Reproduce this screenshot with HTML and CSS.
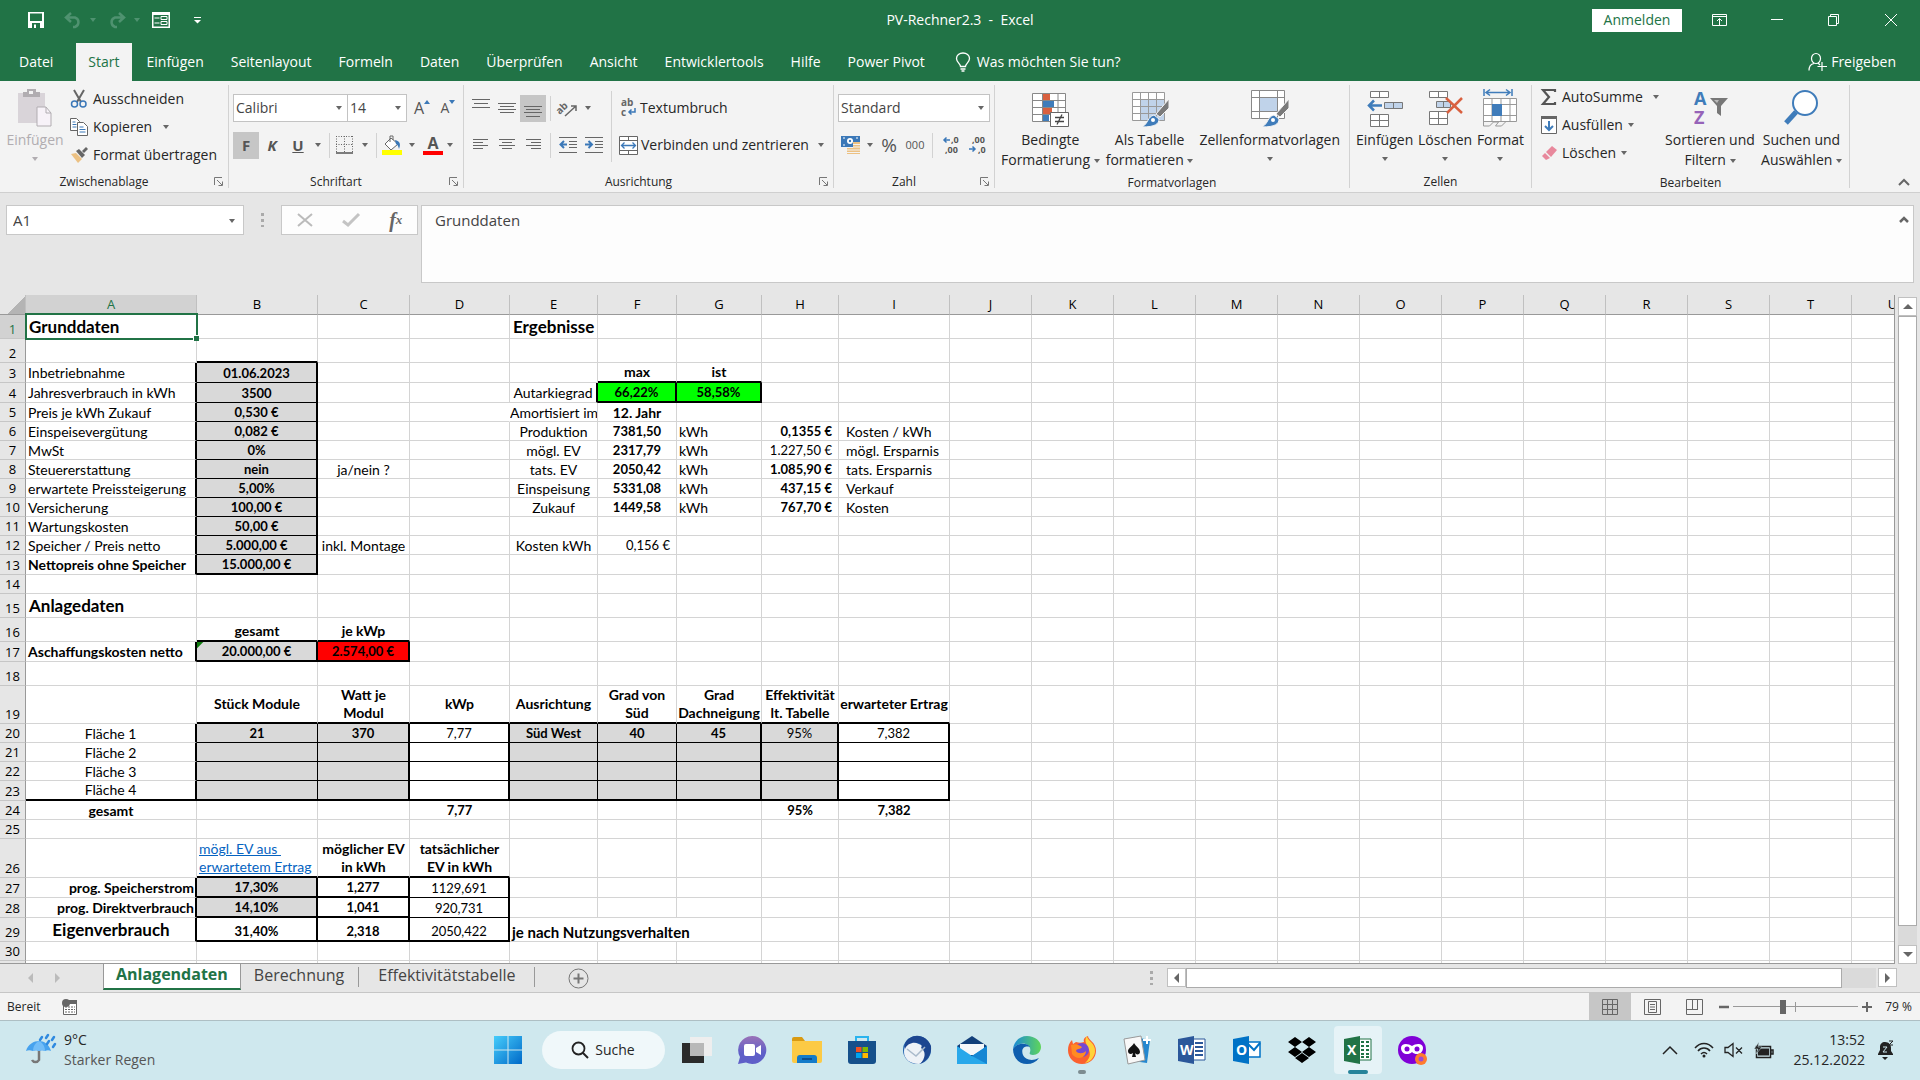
FILE: index.html
```html
<!DOCTYPE html>
<html lang="de">
<head>
<meta charset="utf-8">
<title>PV-Rechner2.3 - Excel</title>
<link rel="stylesheet" href="styles.css">
</head>
<body>
<div class="app">

<header class="titlebar">
  <div class="quick">
    <button aria-label="Speichern"><svg width="16" height="16" viewBox="0 0 16 16"><path d="M0 0h16v16H0z" fill="#fff"/><path d="M2 1.500h12V9H2zM4 11h8v5H4z" fill="#217346"/><path d="M6 12.500h2V16H6z" fill="#fff"/></svg></button>
    <button class="dim" aria-label="Rückgängig"><svg width="18" height="16" viewBox="0 0 18 16"><path d="M7 1L2 5.500 7 10M2 5.500h9a5 5 0 0 1 0 9.500H9" fill="none" stroke="currentColor" stroke-width="2.500"/></svg><i class="caret"></i></button>
    <button class="dim" aria-label="Wiederholen"><svg width="18" height="16" viewBox="0 0 18 16"><path d="M11 1l5 4.500L11 10M16 5.500H7a5 5 0 0 0 0 9.500h2" fill="none" stroke="currentColor" stroke-width="2.500"/></svg><i class="caret"></i></button>
    <button aria-label="Formular"><svg width="18" height="16" viewBox="0 0 18 16"><path d="M0 0h18v16H0z" fill="#fff"/><path d="M1.500 3h15v11.500h-15z" fill="#217346"/><path d="M2.500 6h5M2.500 11h5" stroke="#fff" stroke-width="1.200"/><path d="M9 4.500h6v3H9zM9 9.500h6v3H9z" fill="none" stroke="#fff"/></svg></button>
    <button class="customize" aria-label="Schnellzugriff anpassen"><svg width="7" height="7" viewBox="0 0 7 7"><path d="M0 .5h7" stroke="#fff"/><path d="M0 3h7L3.500 6.500z" fill="#fff"/></svg></button>
  </div>
  <h1 class="doc-title">PV-Rechner2.3&nbsp; - &nbsp;Excel</h1>
  <div class="window-buttons">
    <button class="signin">Anmelden</button>
    <button aria-label="Menüband-Anzeigeoptionen"><svg width="16" height="14" viewBox="0 0 16 14"><path d="M.5 1.500h14v11H.5zM.5 3.500h14M7.500 12V5.500M5 8l2.500-2.500L10 8" fill="none" stroke="#fff"/></svg></button>
    <button aria-label="Minimieren"><svg width="14" height="14" viewBox="0 0 14 14"><path d="M1 6.500h12" stroke="#fff"/></svg></button>
    <button aria-label="Verkleinern"><svg width="14" height="14" viewBox="0 0 14 14"><path d="M1.500 3.500h8v9h-8zM3.500 3V1.500h8v9h-2" fill="none" stroke="#fff"/></svg></button>
    <button aria-label="Schließen"><svg width="14" height="14" viewBox="0 0 14 14"><path d="M1 1l12 12M13 1L1 13" stroke="#fff"/></svg></button>
  </div>
</header>

<nav class="tabs">
  <button class="file">Datei</button>
  <button class="active">Start</button>
  <button>Einfügen</button>
  <button>Seitenlayout</button>
  <button>Formeln</button>
  <button>Daten</button>
  <button>Überprüfen</button>
  <button>Ansicht</button>
  <button>Entwicklertools</button>
  <button>Hilfe</button>
  <button>Power Pivot</button>
  <button class="tell"><svg width="16" height="20" viewBox="0 0 16 20"><path d="M5.500 14.500c0-3-4-4-4-8a6.500 5.500 0 0 1 13 0c0 4-4 5-4 8zM5.500 17h5M6.500 19h3" fill="none" stroke="#fff" stroke-width="1.300"/></svg>Was möchten Sie tun?</button>
  <button class="share"><svg width="19" height="18" viewBox="0 0 19 18"><ellipse cx="8" cy="5.500" rx="4.500" ry="5" fill="none" stroke="#fff" stroke-width="1.200"/><path d="M1 17.500c0-4 2-6.500 5-7M10 10l2 2M14 9v9M9.500 13.500H19" fill="none" stroke="#fff" stroke-width="1.200"/></svg>Freigeben</button>
</nav>

<section class="ribbon">
  <div class="group g-clip">
    <div class="body">
      <button class="big disabled"><svg width="36" height="38" viewBox="0 0 36 38"><path d="M1 4h27v30H1z" fill="#d9d4d9"/><path d="M6 8V3h4V0h9v3h4v5z" fill="#b1adb1"/><path d="M12 2h4v3h-4z" fill="#f3f3f3"/><path d="M20 18h9l5 6v13H20z" fill="#f7f2f8" stroke="#b1adb1"/><path d="M29 18v6h5" fill="none" stroke="#b1adb1"/></svg><span>Einfügen</span><i class="caret"></i></button>
      <div class="stack">
        <button><svg width="18" height="18" viewBox="0 0 18 18"><path d="M4 0l7 12M14 0L7 12" stroke="#666" stroke-width="2"/><circle cx="4.500" cy="14" r="3" fill="none" stroke="#3b78b8" stroke-width="1.500"/><circle cx="13" cy="14" r="3" fill="none" stroke="#3b78b8" stroke-width="1.500"/></svg>Ausschneiden</button>
        <button><svg width="18" height="18" viewBox="0 0 18 18"><path d="M.5.5h6l3 3v9h-9z" fill="#fff" stroke="#666"/><path d="M2.500 4h3M2.500 6.500h4M2.500 9h4" stroke="#3b78b8"/><path d="M7.500 4.500h6l4 4v9h-10z" fill="#fff" stroke="#666"/><path d="M9.500 9h4M9.500 11.500h6M9.500 14h6" stroke="#3b78b8"/></svg>Kopieren<i class="caret"></i></button>
        <button><svg width="18" height="18" viewBox="0 0 18 18"><path d="M1 8l5-1 6 6-4 4z" fill="#ecc183"/><path d="M6 5l3-2 6 6-3 3z" fill="#666"/><path d="M12 5l4-4 2 2-4 4z" fill="#666"/></svg>Format übertragen</button>
      </div>
    </div>
    <footer class="has-launch">Zwischenablage<svg class="launch" width="9" height="9" viewBox="0 0 9 9"><path d="M.5 8V.5H8M3 3l5 5M8.500 4.500v4h-4" fill="none" stroke="#777"/></svg></footer>
  </div>

  <div class="group g-font">
    <div class="body rows">
      <div class="row">
        <span class="combo font"><select aria-label="Schriftart"><option>Calibri</option></select></span><span class="combo size"><select aria-label="Schriftgrad"><option>14</option></select></span>
        <button class="ic grow" aria-label="Schrift vergrößern">A<svg width="6" height="4" viewBox="0 0 6 4"><path d="M0 4l3-4 3 4z" fill="#3b78b8"/></svg></button>
        <button class="ic grow small" aria-label="Schrift verkleinern">A<svg width="6" height="4" viewBox="0 0 6 4"><path d="M0 0h6L3 4z" fill="#3b78b8"/></svg></button>
      </div>
      <div class="row">
        <button class="ic on bold">F</button>
        <button class="ic bold italic">K</button>
        <button class="ic bold under">U</button><i class="caret"></i>
        <hr>
        <button class="ic" aria-label="Rahmen"><svg width="18" height="18" viewBox="0 0 18 18"><path d="M.5 0v17M8.500 0v17M16.500 0v17M0 .5h17M0 8.500h17" stroke="#666" stroke-dasharray="1 1.500"/><path d="M0 17h17" stroke="#555" stroke-width="1.500"/></svg></button><i class="caret"></i>
        <hr>
        <button class="ic" aria-label="Füllfarbe"><svg width="20" height="20" viewBox="0 0 20 20"><path d="M9 3l7 6-7 6-6-6zM8 7V1h3v4" fill="#fff" stroke="#666"/><path d="M13 5c5 1 6 4 4 9-1-3-1-4-3-5z" fill="#3b78b8"/><path d="M0 15h20v5H0z" fill="#ff0"/></svg></button><i class="caret"></i>
        <button class="ic fontcolor" aria-label="Schriftfarbe">A</button><i class="caret"></i>
      </div>
    </div>
    <footer class="has-launch">Schriftart<svg class="launch" width="9" height="9" viewBox="0 0 9 9"><path d="M.5 8V.5H8M3 3l5 5M8.500 4.500v4h-4" fill="none" stroke="#777"/></svg></footer>
  </div>

  <div class="group g-align">
    <div class="body">
      <div class="rows">
        <div class="row">
          <button class="ic" aria-label="Oben"><svg width="18" height="18" viewBox="0 0 18 18"><path d="M0 .5h18M2 4.500h14M0 8.500h18" stroke="#666"/></svg></button>
          <button class="ic" aria-label="Mitte"><svg width="18" height="18" viewBox="0 0 18 18"><path d="M0 4.500h18M2 7.500h14M0 10.500h18M2 13.500h14" stroke="#666"/></svg></button>
          <button class="ic on" aria-label="Unten"><svg width="18" height="18" viewBox="0 0 18 18"><path d="M0 7.500h18M2 10.500h14M0 13.500h18M2 17.500h14" stroke="#666"/></svg></button>
          <hr>
          <button class="ic" aria-label="Ausrichtung"><svg width="18" height="18" viewBox="0 0 18 18"><text x="-3" y="11" transform="rotate(-45 5 9)" class="t-icon">ab</text><path d="M6 17L17 7M12 7h5v5" fill="none" stroke="#666" stroke-width="1.500"/></svg></button><i class="caret"></i>
        </div>
        <div class="row">
          <button class="ic" aria-label="Links"><svg width="18" height="18" viewBox="0 0 18 18"><path d="M1 3.500h15M1 6.500h10M1 9.500h15M1 12.500h10" stroke="#666"/></svg></button>
          <button class="ic" aria-label="Zentriert"><svg width="18" height="18" viewBox="0 0 18 18"><path d="M1 3.500h16M4 6.500h10M1 9.500h16M4 12.500h10" stroke="#666"/></svg></button>
          <button class="ic" aria-label="Rechts"><svg width="18" height="18" viewBox="0 0 18 18"><path d="M2 3.500h15M7 6.500h10M2 9.500h15M7 12.500h10" stroke="#666"/></svg></button>
          <hr>
          <button class="ic" aria-label="Einzug verkleinern"><svg width="18" height="18" viewBox="0 0 18 18"><path d="M0 1.500h18M10 5.500h8M10 8.500h8M10 11.500h8M0 16.500h18" stroke="#666"/><path d="M8 8.500H2M5 5L1.500 8.500 5 12" fill="none" stroke="#3b78b8" stroke-width="2"/></svg></button>
          <button class="ic" aria-label="Einzug vergrößern"><svg width="18" height="18" viewBox="0 0 18 18"><path d="M0 1.500h18M10 5.500h8M10 8.500h8M10 11.500h8M0 16.500h18" stroke="#666"/><path d="M0 8.500h6M3.500 5L7 8.500 3.500 12" fill="none" stroke="#3b78b8" stroke-width="2"/></svg></button>
        </div>
      </div>
      <hr class="tall">
      <div class="rows">
        <div class="row"><button class="lab"><svg width="18" height="18" viewBox="0 0 18 18"><text x="2" y="7" class="t-icon">ab</text><text x="2" y="17" class="t-icon">c</text><path d="M16 9v4H10M12.500 10.500L10 13l2.500 2.500" fill="none" stroke="#3b78b8" stroke-width="1.500"/></svg>Textumbruch</button></div>
        <div class="row"><button class="lab"><svg width="19" height="19" viewBox="0 0 19 19"><path d="M.5.5h18v18H.5zM.5 4.500h18M.5 14.500h18M9.500 0v4M9.500 15v4" fill="#fff" stroke="#666"/><path d="M2.500 9.500h14M5.500 6.500l-3 3 3 3M13.500 6.500l3 3-3 3" fill="none" stroke="#3b78b8" stroke-width="1.300"/></svg>Verbinden und zentrieren<i class="caret"></i></button></div>
      </div>
    </div>
    <footer class="has-launch">Ausrichtung<svg class="launch" width="9" height="9" viewBox="0 0 9 9"><path d="M.5 8V.5H8M3 3l5 5M8.500 4.500v4h-4" fill="none" stroke="#777"/></svg></footer>
  </div>

  <div class="group g-num">
    <div class="body rows">
      <div class="row"><span class="combo wide"><select aria-label="Zahlenformat"><option>Standard</option></select></span></div>
      <div class="row">
        <button class="ic" aria-label="Währung"><svg width="20" height="20" viewBox="0 0 20 20"><path d="M0 1h19v11H0z" fill="#3b78b8"/><circle cx="9" cy="6" r="3" fill="#fff"/><circle cx="9" cy="6" r="1.200" fill="#3b78b8"/><path d="M2 3h2M15 3h2M2 10h2" stroke="#fff"/><path d="M12 7h7v12h-7zM6 13h7v6H6z" fill="#ecc183"/><path d="M12 9.500h7M12 12h7M6 15h13M6 17.500h13" stroke="#f3f3f3"/></svg></button><i class="caret"></i>
        <button class="ic pct">%</button>
        <button class="ic zeros">000</button>
        <hr>
        <button class="ic" aria-label="Dezimalstelle hinzufügen"><svg width="18" height="20" viewBox="0 0 18 20"><text x="8" y="8" class="t-num">,0</text><text x="2" y="18" class="t-num">,00</text><path d="M7 5H1M3.500 2.500L1 5l2.500 2.500" fill="none" stroke="#3b78b8" stroke-width="1.500"/></svg></button>
        <button class="ic" aria-label="Dezimalstelle löschen"><svg width="18" height="20" viewBox="0 0 18 20"><text x="3" y="8" class="t-num">,00</text><text x="9" y="18" class="t-num">,0</text><path d="M0 14h6M3.500 11.500L6 14l-2.500 2.500" fill="none" stroke="#3b78b8" stroke-width="1.500"/></svg></button>
      </div>
    </div>
    <footer class="has-launch">Zahl<svg class="launch" width="9" height="9" viewBox="0 0 9 9"><path d="M.5 8V.5H8M3 3l5 5M8.500 4.500v4h-4" fill="none" stroke="#777"/></svg></footer>
  </div>

  <div class="group g-styles">
    <div class="body">
      <button class="big"><svg width="38" height="38" viewBox="0 0 38 38"><path d="M1.500 4.500h33v28h-33z" fill="#fff"/><path d="M12 4h7v7h-7zM12 19h9v7h-9z" fill="#d9603f"/><path d="M12 11h11v8H12zM12 26h6v6h-6z" fill="#3f7cba"/><path d="M1.500 4.500h33v28h-33zM11.500 4v28M27 4v28M1 11.500h33M1 18.500h33M1 25.500h33" fill="none" stroke="#888"/><path d="M19.500 23.500h18v14h-18z" fill="#fff" stroke="#666"/><path d="M24 28.500h9M24 32.500h9M31 25.500l-5 10" stroke="#444" stroke-width="1.300"/></svg><span>Bedingte<br>Formatierung <i class="caret"></i></span></button>
      <button class="big"><svg width="38" height="38" viewBox="0 0 38 38"><path d="M1.500 3.500h32v28h-32z" fill="#fff"/><path d="M9 10h25v22H9z" fill="#c0d3ea"/><path d="M1.500 3.500h32v28h-32zM9.500 4v28M17.500 4v28M25.500 4v28M1 10.500h32M1 17.500h32M1 24.500h32" fill="none" stroke="#999"/><path d="M38 10v9l-9 9-4-3z" fill="#7a7a7a" stroke="#f3f3f3"/><path d="M23 26l5 4c0 5-4 8-17 8 7-4 5-10 12-12z" fill="#3f7cba" stroke="#f3f3f3"/><circle cx="22" cy="31" r="2" fill="#fff"/></svg><span>Als Tabelle<br>formatieren <i class="caret"></i></span></button>
      <button class="big"><svg width="38" height="38" viewBox="0 0 38 38"><path d="M.5 1.500h33v28H.5z" fill="#fff"/><path d="M8 8h18v15H8z" fill="#c0d3ea"/><path d="M.5 1.500h33v28H.5zM8.500 2v27M26.500 2v27M0 8.500h33M0 22.500h33" fill="none" stroke="#888"/><path d="M38 10v9l-9 9-4-3z" fill="#7a7a7a" stroke="#f3f3f3"/><path d="M23 26l5 4c0 5-4 8-17 8 7-4 5-10 12-12z" fill="#3f7cba" stroke="#f3f3f3"/><circle cx="22" cy="31" r="2" fill="#fff"/></svg><span>Zellenformatvorlagen</span><i class="caret"></i></button>
    </div>
    <footer>Formatvorlagen</footer>
  </div>

  <div class="group g-cells">
    <div class="body">
      <button class="big"><svg width="38" height="38" viewBox="0 0 38 38"><path d="M4.500 2.500h18v6h-18zM13.500 2v6M4.500 25.500h18v12h-18zM13.500 25v12M4 31.500h18" fill="#fff" stroke="#777"/><path d="M18.500 13.500h18v6h-18zM27.500 13v6" fill="#c0d3ea" stroke="#777"/><path d="M16 16.500H3M8 11.500l-5 5 5 5" fill="none" stroke="#3f7cba" stroke-width="2.500"/></svg><span>Einfügen</span><i class="caret"></i></button>
      <button class="big"><svg width="38" height="38" viewBox="0 0 38 38"><path d="M3.500 2.500h18v6h-18zM12.500 2v6M3.500 22.500h18v13h-18zM12.500 22v13M3 29.500h18" fill="#fff" stroke="#777"/><path d="M10.500 12.500h14v6h-14zM17.500 12v6" fill="#c0d3ea" stroke="#777"/><path d="M20 9l16 15M36 9L21 24" stroke="#d9603f" stroke-width="2.500"/></svg><span>Löschen</span><i class="caret"></i></button>
      <button class="big"><svg width="38" height="38" viewBox="0 0 38 38"><path d="M3 0v7M31 0v7M5 3.500h24M9 .5l-4 3 4 3M25 .5l4 3-4 3" fill="none" stroke="#3f7cba" stroke-width="1.500"/><path d="M2.500 9.500h33v23h-33z" fill="#fff"/><path d="M2.500 9.500h33v23h-33zM11 9v23M20 9v23M29 9v23M2 15.500h33M2 26.500h33M2.500 32v5h6l4-4h5l-3 4h6l4-4" fill="none" stroke="#999"/><path d="M11 15h10v12H11z" fill="#3f7cba"/></svg><span>Format</span><i class="caret"></i></button>
    </div>
    <footer>Zellen</footer>
  </div>

  <div class="group g-edit">
    <div class="body">
      <div class="stack">
        <button><svg width="16" height="18" viewBox="0 0 16 18"><path d="M14 4V2H2l6 7-6 7h12v-2" fill="none" stroke="#555" stroke-width="2.200"/></svg>AutoSumme<i class="caret far"></i></button>
        <button><svg width="16" height="18" viewBox="0 0 16 18"><path d="M.5.5h15v17H.5z" fill="#fff" stroke="#666"/><path d="M0 0h16v3H0z" fill="#666"/><path d="M8 5v9M4 10l4 4 4-4" fill="none" stroke="#3f7cba" stroke-width="2"/></svg>Ausfüllen<i class="caret"></i></button>
        <button><svg width="16" height="18" viewBox="0 0 16 18"><path d="M5 8l6-6 5 4-6 7z" fill="#e8889c"/><path d="M4 9l5 5-4 2-4-4z" fill="#e8889c"/></svg>Löschen<i class="caret"></i></button>
      </div>
      <button class="big"><svg width="38" height="38" viewBox="0 0 38 38"><text x="3" y="16" class="t-a">A</text><text x="3" y="35" class="t-z">Z</text><path d="M19 9h18l-7 8v10l-4-3v-7z" fill="#777"/><path d="M23 11h5l-2 3z" fill="#bbb"/></svg><span>Sortieren und<br>Filtern <i class="caret"></i></span></button>
      <button class="big"><svg width="38" height="38" viewBox="0 0 38 38"><path d="M13 23L3 34" stroke="#3f7cba" stroke-width="5"/><circle cx="22" cy="14" r="12" fill="#fff" stroke="#3f7cba" stroke-width="2"/></svg><span>Suchen und<br>Auswählen <i class="caret"></i></span></button>
    </div>
    <footer>Bearbeiten</footer>
  </div>
  <button class="collapse" aria-label="Menüband reduzieren"><svg width="12" height="8" viewBox="0 0 12 8"><path d="M1 7l5-5 5 5" fill="none" stroke="#666" stroke-width="2"/></svg></button>
</section>

<section class="formula">
  <span class="combo name"><input aria-label="Namenfeld" value="A1"></span>
  <span class="dots"></span>
  <div class="fx">
    <button aria-label="Abbrechen"><svg width="16" height="14" viewBox="0 0 16 14"><path d="M1 1l14 12M15 1L1 13" stroke="#bbb" stroke-width="2"/></svg></button>
    <button aria-label="Eingeben"><svg width="18" height="14" viewBox="0 0 18 14"><path d="M1 8l5 4L17 1" fill="none" stroke="#c4c4c4" stroke-width="3"/></svg></button>
    <button class="fn" aria-label="Funktion einfügen">f<sub>x</sub></button>
  </div>
  <div class="input"><textarea aria-label="Bearbeitungsleiste">Grunddaten</textarea><button aria-label="Reduzieren"><svg width="10" height="7" viewBox="0 0 10 7"><path d="M1 6l4-4 4 4" fill="none" stroke="#666" stroke-width="2.500"/></svg></button></div>
</section>

<main class="sheet">
  <div class="pane">
  <table class="grid">
    <colgroup><col class="w-n"><col class="w-a"><col class="w-b"><col class="w-c"><col class="w-d"><col class="w-e"><col class="w-f"><col class="w-g"><col class="w-h"><col class="w-i"><col class="w-x" span="12"></colgroup>
    <thead><tr><th class="corner"></th><th class="sel">A</th><th>B</th><th>C</th><th>D</th><th>E</th><th>F</th><th>G</th><th>H</th><th>I</th><th>J</th><th>K</th><th>L</th><th>M</th><th>N</th><th>O</th><th>P</th><th>Q</th><th>R</th><th>S</th><th>T</th><th>U</th></tr></thead>
    <tbody>
    <tr class="h24"><th class="sel">1</th><td class="head cursor">Grunddaten</td><td></td><td></td><td></td><td class="head">Ergebnisse</td><td></td><td></td><td></td><td></td><td colspan="12" class="rest"></td></tr>
    <tr class="h24"><th>2</th><td></td><td class="tb"></td><td></td><td></td><td></td><td></td><td></td><td></td><td></td><td colspan="12" class="rest"></td></tr>
    <tr class="h20"><th>3</th><td class="tr">Inbetriebnahme</td><td class="in tr">01.06.2023</td><td></td><td></td><td></td><td class="b c tb">max</td><td class="b c tb">ist</td><td></td><td></td><td colspan="12" class="rest"></td></tr>
    <tr class="h20"><th>4</th><td class="tr">Jahresverbrauch in kWh</td><td class="in tr">3500</td><td></td><td></td><td class="c tr">Autarkiegrad</td><td class="green b c m tr tb">66,22%</td><td class="green b c m tr tb">58,58%</td><td></td><td></td><td colspan="12" class="rest"></td></tr>
    <tr><th>5</th><td class="tr">Preis je kWh Zukauf</td><td class="in tr">0,530 €</td><td></td><td class="open"></td><td class="c tight">Amortisiert im</td><td class="b c">12. Jahr</td><td></td><td></td><td></td><td colspan="12" class="rest"></td></tr>
    <tr><th>6</th><td class="tr">Einspeisevergütung</td><td class="in tr">0,082 €</td><td></td><td></td><td class="c">Produktion</td><td class="b c m">7381,50</td><td>kWh</td><td class="b r">0,1355 €</td><td class="ind">Kosten / kWh</td><td colspan="12" class="rest"></td></tr>
    <tr><th>7</th><td class="tr">MwSt</td><td class="in tr">0%</td><td></td><td></td><td class="c">mögl. EV</td><td class="b c m">2317,79</td><td>kWh</td><td class="r">1.227,50 €</td><td class="ind">mögl. Ersparnis</td><td colspan="12" class="rest"></td></tr>
    <tr><th>8</th><td class="tr">Steuererstattung</td><td class="in tr">nein</td><td class="c">ja/nein ?</td><td></td><td class="c">tats. EV</td><td class="b c m">2050,42</td><td>kWh</td><td class="b r">1.085,90 €</td><td class="ind">tats. Ersparnis</td><td colspan="12" class="rest"></td></tr>
    <tr><th>9</th><td class="tr">erwartete Preissteigerung</td><td class="in tr">5,00%</td><td></td><td></td><td class="c">Einspeisung</td><td class="b c m">5331,08</td><td>kWh</td><td class="b r">437,15 €</td><td class="ind">Verkauf</td><td colspan="12" class="rest"></td></tr>
    <tr><th>10</th><td class="tr">Versicherung</td><td class="in tr">100,00 €</td><td></td><td></td><td class="c">Zukauf</td><td class="b c m">1449,58</td><td>kWh</td><td class="b r">767,70 €</td><td class="ind">Kosten</td><td colspan="12" class="rest"></td></tr>
    <tr><th>11</th><td class="tr">Wartungskosten</td><td class="in tr">50,00 €</td><td></td><td></td><td></td><td></td><td></td><td></td><td></td><td colspan="12" class="rest"></td></tr>
    <tr><th>12</th><td class="tr">Speicher / Preis netto</td><td class="in tr">5.000,00 €</td><td class="c">inkl. Montage</td><td></td><td class="c">Kosten kWh</td><td class="r">0,156 €</td><td></td><td></td><td></td><td colspan="12" class="rest"></td></tr>
    <tr class="h20"><th>13</th><td class="b tr">Nettopreis ohne Speicher</td><td class="in tr tb">15.000,00 €</td><td></td><td></td><td></td><td></td><td></td><td></td><td></td><td colspan="12" class="rest"></td></tr>
    <tr><th>14</th><td></td><td></td><td></td><td></td><td></td><td></td><td></td><td></td><td></td><td colspan="12" class="rest"></td></tr>
    <tr class="h24"><th>15</th><td class="head">Anlagedaten</td><td></td><td></td><td></td><td></td><td></td><td></td><td></td><td></td><td colspan="12" class="rest"></td></tr>
    <tr class="h24"><th>16</th><td></td><td class="b c tb">gesamt</td><td class="b c tb">je kWp</td><td></td><td></td><td></td><td></td><td></td><td></td><td colspan="12" class="rest"></td></tr>
    <tr class="h20"><th>17</th><td class="b tr">Aschaffungskosten netto</td><td class="in tr tb flag">20.000,00 €</td><td class="red b c m tr tb">2.574,00 €</td><td></td><td></td><td></td><td></td><td></td><td></td><td colspan="12" class="rest"></td></tr>
    <tr class="h24"><th>18</th><td></td><td></td><td></td><td></td><td></td><td></td><td></td><td></td><td></td><td colspan="12" class="rest"></td></tr>
    <tr class="h38"><th>19</th><td></td><td class="b c tb">Stück Module</td><td class="b c tb">Watt je<br>Modul</td><td class="b c tb">kWp</td><td class="b c tb">Ausrichtung</td><td class="b c tb">Grad von<br>Süd</td><td class="b c tb tight">Grad<br>Dachneigung</td><td class="b c tb tight">Effektivität<br>lt. Tabelle</td><td class="b c tb tight">erwarteter Ertrag</td><td colspan="12" class="rest"></td></tr>
    <tr><th>20</th><td class="c tr">Fläche 1</td><td class="in">21</td><td class="in tr">370</td><td class="c box tr">7,77</td><td class="in">Süd West</td><td class="in">40</td><td class="in tr">45</td><td class="in n tr">95%</td><td class="c box tr">7,382</td><td colspan="12" class="rest"></td></tr>
    <tr><th>21</th><td class="c tr">Fläche 2</td><td class="in"></td><td class="in tr"></td><td class="box tr"></td><td class="in"></td><td class="in"></td><td class="in tr"></td><td class="in tr"></td><td class="box tr"></td><td colspan="12" class="rest"></td></tr>
    <tr><th>22</th><td class="c tr">Fläche 3</td><td class="in"></td><td class="in tr"></td><td class="box tr"></td><td class="in"></td><td class="in"></td><td class="in tr"></td><td class="in tr"></td><td class="box tr"></td><td colspan="12" class="rest"></td></tr>
    <tr class="h20"><th>23</th><td class="c tr tb">Fläche 4</td><td class="in tb"></td><td class="in tr tb"></td><td class="tr tb"></td><td class="in tb"></td><td class="in tb"></td><td class="in tr tb"></td><td class="in tr tb"></td><td class="tr tb"></td><td colspan="12" class="rest"></td></tr>
    <tr><th>24</th><td class="b c">gesamt</td><td></td><td></td><td class="b c m">7,77</td><td></td><td></td><td></td><td class="b c m">95%</td><td class="b c m">7,382</td><td colspan="12" class="rest"></td></tr>
    <tr><th>25</th><td></td><td></td><td></td><td></td><td></td><td></td><td></td><td></td><td></td><td colspan="12" class="rest"></td></tr>
    <tr class="h39"><th>26</th><td></td><td class="b tb"><a href="#effektivitaet">mögl. EV aus&nbsp;<br>erwartetem Ertrag</a></td><td class="b c tb">möglicher EV<br>in kWh</td><td class="b c tb">tatsächlicher<br>EV in kWh</td><td></td><td></td><td></td><td></td><td></td><td colspan="12" class="rest"></td></tr>
    <tr class="h20"><th>27</th><td class="b end tr">prog. Speicherstrom</td><td class="in tr tb">17,30%</td><td class="b c m tr tb">1,277</td><td class="c box tr">1129,691</td><td></td><td></td><td></td><td></td><td></td><td colspan="12" class="rest"></td></tr>
    <tr class="h20"><th>28</th><td class="b end tr">prog. Direktverbrauch</td><td class="in tr tb">14,10%</td><td class="b c m tr tb">1,041</td><td class="c box tr">920,731</td><td></td><td></td><td></td><td></td><td></td><td colspan="12" class="rest"></td></tr>
    <tr class="h24"><th>29</th><td class="head c tr">Eigenverbrauch</td><td class="b c m tr tb">31,40%</td><td class="b c m tr tb">2,318</td><td class="c m tr tb">2050,422</td><td colspan="3" class="b note">je nach Nutzungsverhalten</td><td></td><td></td><td colspan="12" class="rest"></td></tr>
    <tr><th>30</th><td></td><td></td><td></td><td></td><td></td><td></td><td></td><td></td><td></td><td colspan="12" class="rest"></td></tr>
    <tr><th></th><td></td><td></td><td></td><td></td><td></td><td></td><td></td><td></td><td></td><td colspan="12" class="rest"></td></tr>
    </tbody>
  </table>
  </div>
  <div class="vscroll">
    <button aria-label="Nach oben"><i class="tri up"></i></button>
    <div class="track"><div class="thumb"></div></div>
    <button aria-label="Nach unten"><i class="tri down"></i></button>
  </div>
</main>

<nav class="sheets">
  <div class="nav"><i class="tri left"></i><i class="tri right"></i></div>
  <button class="active">Anlagendaten</button>
  <button class="first">Berechnung</button>
  <button>Effektivitätstabelle</button>
  <button class="add" aria-label="Neues Blatt"><svg width="21" height="21" viewBox="0 0 21 21"><circle cx="10.500" cy="10.500" r="9.500" fill="none" stroke="#777"/><path d="M10.500 5.500v10M5.500 10.500h10" stroke="#777" stroke-width="2"/></svg></button>
  <div class="hscroll">
    <span class="dots"></span>
    <button aria-label="Nach links"><i class="tri left"></i></button>
    <div class="track"><div class="thumb"></div></div>
    <button aria-label="Nach rechts"><i class="tri right"></i></button>
  </div>
</nav>

<footer class="status">
  <span>Bereit</span>
  <svg width="16" height="16" viewBox="0 0 16 16"><path d="M1.500 3.500h13v12h-13z" fill="#fff" stroke="#666"/><path d="M6 1h9v4H6z" fill="#666"/><circle cx="4" cy="4" r="4" fill="#666"/><path d="M3 8h10M3 10.500h10M3 13h10" stroke="#666" stroke-dasharray="2 1"/></svg>
  <div class="views">
    <button class="on" aria-label="Normal"><svg width="16" height="16" viewBox="0 0 16 16"><path d="M.5.5h15v15H.5zM5.500 0v16M10.500 0v16M0 5.500h16M0 10.500h16" fill="none" stroke="#666"/></svg></button>
    <button aria-label="Seitenlayout"><svg width="17" height="16" viewBox="0 0 17 16"><path d="M.5.5h16v15H.5zM4.500 2.500h8v11h-8zM6 5.500h5M6 8h5M6 10.500h5" fill="none" stroke="#666"/></svg></button>
    <button aria-label="Umbruchvorschau"><svg width="17" height="16" viewBox="0 0 17 16"><path d="M.5.5h16v15H.5zM6.500 0v10M11.500 0v10M0 10.500h12" fill="none" stroke="#666"/></svg></button>
  </div>
  <button class="zoom" aria-label="Verkleinern"><svg width="10" height="10" viewBox="0 0 10 10"><path d="M0 5h10" stroke="#666" stroke-width="2.500"/></svg></button>
  <input type="range" aria-label="Zoom" min="10" max="158" value="68">
  <button class="zoom" aria-label="Vergrößern"><svg width="10" height="10" viewBox="0 0 10 10"><path d="M0 5h10M5 0v10" stroke="#666" stroke-width="2"/></svg></button>
  <span class="percent">79 %</span>
</footer>

<footer class="taskbar">
  <div class="weather">
    <svg width="30" height="32" viewBox="0 0 30 32"><path d="M13 8v18a4 4 0 0 1-7 0" fill="none" stroke="#777" stroke-width="2.500"/><path d="M0 17C2 10 8 7 13 7s10 3 12 10c-2-1-4-1-6 0-2-1-4-1-6 0-2-1-4-1-6 0-3-1-5-1-7 0z" fill="#47a2ee"/><path d="M7 17c0-4 2-8 6-10 4 2 6 6 6 10-2-1-4-1-6 0-2-1-4-1-6 0z" fill="#72bdf8"/><path d="M16 3l-2 3M22 1l-2 3M28 3l-2 3M23 7l-2 3M29 10l-2 3" stroke="#2f8ae0" stroke-width="2.500" stroke-linecap="round"/></svg>
    <p>9°C<br><span>Starker Regen</span></p>
  </div>
  <div class="apps">
    <button aria-label="Start"><svg width="30" height="30" viewBox="0 0 30 30"><defs><linearGradient id="win" x2="1" y2="1"><stop stop-color="#46cdfb"/><stop offset="1" stop-color="#0069c8"/></linearGradient></defs><path d="M1 1h13.500v13.500H1zM15.500 1H29v13.500H15.500zM1 15.500h13.500V29H1zM15.500 15.500H29V29H15.500z" fill="url(#win)"/></svg></button>
    <button class="search"><svg width="18" height="18" viewBox="0 0 18 18"><circle cx="7.500" cy="7.500" r="6" fill="none" stroke="#222" stroke-width="1.800"/><path d="M12 12l5 5" stroke="#222" stroke-width="2"/></svg>Suche</button>
    <button aria-label="Aktive Anwendungen"><svg width="30" height="30" viewBox="0 0 30 30"><path d="M0 8h22v20H0z" fill="#2b2b2b"/><path d="M8 2h22v19H8z" fill="#eee"/><path d="M8 8h14v13H8z" fill="#b8b8b8"/></svg></button>
    <button aria-label="Chat"><svg width="30" height="30" viewBox="0 0 30 30"><defs><linearGradient id="chat" x2="0" y2="1"><stop stop-color="#9a72b8"/><stop offset=".6" stop-color="#5f5fc8"/></linearGradient></defs><path d="M15 1a14 14 0 1 1-6 26.500L1 29l2-7A14 14 0 0 1 15 1z" fill="url(#chat)"/><rect x="7" y="9" width="11" height="12" rx="2" fill="#fff"/><path d="M19 13l5-3v10l-5-3z" fill="#fff"/></svg></button>
    <button aria-label="Explorer"><svg width="30" height="30" viewBox="0 0 30 30"><path d="M0 4a2 2 0 0 1 2-2h8l3 4H0z" fill="#d99a12"/><path d="M0 6h30v20a2 2 0 0 1-2 2H2a2 2 0 0 1-2-2z" fill="#fcca45"/><path d="M5 28v-5a3 3 0 0 1 3-3h14a3 3 0 0 1 3 3v5z" fill="#147bc9"/><path d="M10 24h10" stroke="#0b4e90" stroke-width="2"/></svg></button>
    <button aria-label="Store"><svg width="30" height="30" viewBox="0 0 30 30"><path d="M9 7V2h12v5" fill="none" stroke="#2bb4ee" stroke-width="2"/><path d="M1 6h28v20a3 3 0 0 1-3 3H4a3 3 0 0 1-3-3z" fill="#16508b"/><path d="M9 12h5.500v5H9z" fill="#f25022"/><path d="M15.500 12H21v5h-5.500z" fill="#7fba00"/><path d="M9 18h5.500v5H9z" fill="#00a4ef"/><path d="M15.500 18H21v5h-5.500z" fill="#ffb900"/></svg></button>
    <button aria-label="Thunderbird"><svg width="30" height="30" viewBox="0 0 30 30"><ellipse cx="15" cy="15" rx="14" ry="14" fill="#2463af"/><path d="M2 17C2 10 6 6 12 7l12 5c2 6 0 14-7 17C8 29 2 24 2 17z" fill="#eef2f7"/><path d="M8 3c7-5 18-1 21 8 1 8-4 15-11 18 6-6 6-13 1-16 2-3-1-5-4-5C10 7 5 9 3 14 2 9 4 5 8 3z" fill="#1d4690"/><path d="M5 14l9 7 9-9" fill="none" stroke="#a9bacb" stroke-width="1.500"/></svg></button>
    <button aria-label="Mail"><svg width="30" height="30" viewBox="0 0 30 30"><path d="M0 11L15 1l15 10v18H0z" fill="#123f79"/><path d="M3 9h24v11H3z" fill="#f5f7f9"/><path d="M0 11l15 10 15-10v18H0z" fill="#29a8ea"/><path d="M15 21l15-10v18z" fill="#1686d3"/></svg></button>
    <button aria-label="Edge"><svg width="30" height="30" viewBox="0 0 30 30"><defs><linearGradient id="edge" x2="1"><stop stop-color="#1a8ad8"/><stop offset="1" stop-color="#5fd55a"/></linearGradient></defs><path d="M1 14C2 6 8 1 15 1c8 0 14 5 14 11 0 5-4 8-8 8-3 0-4-1-3-3 2-6-5-10-10-8-4 1-6 3-7 5z" fill="url(#edge)"/><path d="M1 14c3-6 14-7 17-2-7-2-9 3-7 8 2 4 8 7 16 3-3 4-7 6-12 6C7 29 1 23 1 14z" fill="#0f5eae"/></svg></button>
    <button class="running" aria-label="Firefox"><svg width="30" height="30" viewBox="0 0 30 30"><path d="M15 29C7 29 1 23 1 15c0-4 1-7 4-10l1 4 3-2c3 1 5 1 8 0-1-3 1-5 4-6 0 4 8 6 8 15 0 7-6 13-14 13z" fill="#fb612f"/><path d="M20 1c0 5 9 7 8 16-1 6-5 10-10 11 7-6 5-12 3-15-2-5-4-8-1-12z" fill="#ffd33a"/><circle cx="15" cy="15" r="7" fill="#7549d3"/><path d="M4 10c5-2 8 0 11 2-2 3-5 1-6 4 2 3 7 3 10 0 0 7-9 10-14 3z" fill="#ff8b23"/></svg></button>
    <button aria-label="Solitär"><svg width="30" height="30" viewBox="0 0 30 30"><path d="M12 2l16 3-3 23-14-2z" fill="#2587cf"/><path d="M2 4l17-3 4 24-17 4z" fill="#f8f8f8" stroke="#999"/><path d="M12 8c2 4 6 5 6 9 0 3-4 3-5 1l1 4h-4l1-4c-2 2-5 1-5-2 0-3 5-5 6-8z" fill="#111"/><path d="M25 1v8M21 5h8" stroke="#fff" stroke-width="2"/></svg></button>
    <button aria-label="Word"><svg width="30" height="30" viewBox="0 0 30 30"><path d="M14 4h14v21H14z" fill="#fff" stroke="#2b579a"/><path d="M18 8h8M18 12h8M18 16h8M18 20h8" stroke="#2b579a" stroke-width="2"/><path d="M1 4l16-3v28L1 26z" fill="#2b579a"/><text x="3" y="20" class="t-app">W</text></svg></button>
    <button aria-label="Outlook"><svg width="30" height="30" viewBox="0 0 30 30"><path d="M14 7h14v15H14z" fill="#fff" stroke="#0072c6" stroke-width="1.500"/><path d="M16 9l6 6 6-7" fill="none" stroke="#0072c6" stroke-width="2"/><path d="M1 4l16-3v28L1 26z" fill="#0072c6"/><text x="4" y="20" class="t-app">O</text></svg></button>
    <button aria-label="Dropbox"><svg width="30" height="30" viewBox="0 0 30 30"><path d="M8 2l7 5-7 5-7-5zM22 2l7 5-7 5-7-5zM8 12l7 5-7 5-7-5zM22 12l7 5-7 5-7-5zM15 18l7 5-7 5-7-5z" fill="#000"/></svg></button>
    <button class="current" aria-label="Excel"><svg width="30" height="30" viewBox="0 0 30 30"><path d="M14 4h14v21H14z" fill="#fff" stroke="#217346"/><path d="M18 7h3M23 7h3M18 11h3M23 11h3M18 15h3M23 15h3M18 19h3M23 19h3M18 22h3M23 22h3" stroke="#217346" stroke-width="2"/><path d="M1 4l16-3v28L1 26z" fill="#217346"/><text x="4" y="20" class="t-app">X</text></svg></button>
    <button aria-label="Privater Modus"><svg width="30" height="30" viewBox="0 0 30 30"><circle cx="15" cy="15" r="14" fill="#8000d7"/><path d="M4 13c0-5 7-5 11-2 4-3 11-3 11 2 0 6-7 8-11 4-4 4-11 2-11-4z" fill="#fff"/><circle cx="10" cy="14" r="2.500" fill="#8000d7"/><circle cx="20" cy="14" r="2.500" fill="#8000d7"/><circle cx="24" cy="24" r="6" fill="#ff7b2e"/><circle cx="24" cy="24" r="2.500" fill="#a14bd0"/></svg></button>
  </div>
  <div class="tray">
    <svg width="16" height="10" viewBox="0 0 16 10"><path d="M1 9l7-7 7 7" fill="none" stroke="#222" stroke-width="1.500"/></svg>
    <svg class="wifi" width="20" height="16" viewBox="0 0 20 16"><path d="M1 6c5-6 13-6 18 0M4 9c3-4 9-4 12 0M7 12c2-2 4-2 6 0" fill="none" stroke="#222" stroke-width="1.500"/><circle cx="10" cy="14" r="1.500" fill="#222"/></svg>
    <svg width="20" height="16" viewBox="0 0 20 16"><path d="M1 5.500h3l5-4v13l-5-4H1zM12 5.500l6 6M18 5.500l-6 6" fill="none" stroke="#222" stroke-width="1.300"/></svg>
    <svg width="20" height="16" viewBox="0 0 20 16"><path d="M2.500 4.500h14v11h-14zM17 8h2v4h-2z" fill="none" stroke="#222" stroke-width="1.500"/><path d="M4 6.500h11v7H4z" fill="#222"/><path d="M5 0L0 7h4L2 12l6-7H4z" fill="#222" stroke="#cfe8ee" stroke-width=".5"/></svg>
    <p>13:52<br>25.12.2022</p>
    <svg width="17" height="20" viewBox="0 0 17 20"><path d="M1 14l2-4V7c0-3 2-5 5-5 4 0 6 3 6 6v3l2 3v1H1zM5 17h6l-3 3z" fill="#222"/><path d="M6 7h4l-4 5h4" fill="none" stroke="#cfe8ee"/><path d="M12 1h4l-4 4h4" fill="none" stroke="#222"/></svg>
  </div>
</footer>
</div>
</body>
</html>
```
FILE: styles.css
```css
* { box-sizing: border-box; }

body {
  margin: 0;
  font: 14px/20px "Open Sans", "Noto Sans", sans-serif;
  color: #262626;
  background: #e6e6e6;
}

button {
  margin: 0;
  padding: 0;
  border: 0;
  background: none;
  font: inherit;
  color: inherit;
  white-space: nowrap;
  display: flex;
  align-items: center;
}

svg { flex: none; display: block; overflow: visible; }
p { margin: 0; }

.app {
  height: 100vh;
  display: flex;
  flex-direction: column;
  overflow: hidden;
}

.caret {
  display: inline-block;
  flex: none;
  border: 3px solid transparent;
  border-top: 4px solid #666;
  border-bottom: 0;
  vertical-align: middle;
}

/* Title bar */
.titlebar {
  flex: none;
  height: 43px;
  padding-bottom: 3px;
  display: grid;
  grid-template-columns: 1fr auto 1fr;
  align-items: center;
  background: #217346;
  color: #fff;
}
.quick { display: flex; align-items: center; gap: 12px; padding-left: 28px; }
.quick button { gap: 8px; }
.quick button:first-child { margin-right: 8px; }
.quick .dim { color: #4f9270; }
.quick .dim .caret { border-top-color: #4f9270; }
.quick .customize { margin-left: 12px; }
.doc-title { margin: 0; font-size: 14px; font-weight: 400; }
.window-buttons { display: flex; justify-content: flex-end; align-items: center; padding-right: 1px; }
.window-buttons button { width: 57px; height: 30px; justify-content: center; }
.window-buttons .signin {
  width: 90px;
  height: 23px;
  margin-right: 9px;
  background: #fff;
  color: #217346;
}

/* Ribbon tabs */
.tabs {
  flex: none;
  height: 38px;
  display: flex;
  padding: 0 24px 0 7px;
  gap: 3px;
  background: #217346;
  color: #fff;
}
.tabs button { padding: 0 12px; }
.tabs .file { margin-right: 8px; }
.tabs .active { background: #f3f3f3; color: #217346; }
.tabs .tell { gap: 6px; margin-left: 3px; }
.tabs .share { margin-left: auto; padding: 0; gap: 4px; }

/* Ribbon */
.ribbon {
  flex: none;
  height: 112px;
  display: flex;
  background: #f3f3f3;
  border-bottom: 1px solid #cfcfcf;
}
.group {
  display: flex;
  flex-direction: column;
  flex: none;
  position: relative;
  border-right: 1px solid #d2d2d2;
  margin: 4px 0;
}
.group .body { flex: 1; display: flex; }
.group footer {
  height: 19px;
  position: relative;
  text-align: center;
  font-size: 12px;
  line-height: 26px;
}
.group .has-launch { padding-right: 20px; }
.launch { position: absolute; right: 5px; top: 8px; }
.g-clip { width: 229px; }
.g-font { width: 235px; }
.g-align { width: 370px; }
.g-num { width: 161px; }
.g-styles { width: 355px; }
.g-cells { width: 182px; }
.g-edit { width: 318px; }

.big { flex-direction: column; justify-content: flex-start; padding-top: 4px; line-height: 20px; }
.big > span { margin-top: 3px; display: block; text-align: center; }
.big > .caret { margin-top: 7px; }
.big.disabled { color: #b1adb1; width: 70px; }
.big.disabled .caret { border-top-color: #b1adb1; }
.stack { display: flex; flex-direction: column; }
.stack button { height: 28px; gap: 5px; }
.stack .caret { margin-left: 6px; }

.rows { display: flex; flex-direction: column; }
.body.rows { flex-direction: column; }
.rows { padding-top: 9px; gap: 9px; }
.row { height: 28px; display: flex; align-items: center; }
.ic { width: 26px; height: 27px; justify-content: center; color: #555; }
.ic.on { background: #c6c6c6; }
.row hr, .tall { width: 1px; height: 25px; margin: 0 3px; border: 0; background: #d2d2d2; }
.tall { height: 71px; margin: 6px 0 0; }

.combo { position: relative; display: flex; height: 28px; background: #fff; border: 1px solid #c3c3c3; }
.combo::after {
  content: "";
  position: absolute;
  right: 5px;
  top: 11px;
  border: 3px solid transparent;
  border-top: 4px solid #666;
  border-bottom: 0;
}
.combo select, .combo input {
  appearance: none;
  width: 100%;
  border: 0;
  padding: 0 2px;
  background: none;
  font: inherit;
  color: #444;
}
.font { width: 115px; }
.size { width: 60px; margin-left: -1px; }
.wide { width: 152px; }
.g-font .rows, .g-num .rows { padding-left: 4px; }
.g-font .body, .g-num .body { padding-left: 4px; }
.grow { font-size: 16px; align-items: center; margin-left: 2px; }
.grow svg { align-self: flex-start; margin-top: 5px; }
.grow.small { font-size: 14px; margin-left: 0; }
.bold { font-weight: 700; font-size: 15px; }
.italic { font-style: italic; }
.under { text-decoration: underline; }
.g-font .row .caret { margin: 0 6px 0 4px; }
.g-font .row hr { margin: 0 2px; }
.g-font .ic + .ic { margin-left: 0; }
.fontcolor {
  width: 20px;
  height: 20px;
  margin-left: 2px;
  border-bottom: 4px solid #f00;
  font-weight: 700;
  font-size: 16px;
  line-height: 16px;
}
.g-align .body { padding-left: 4px; }
.g-align .row .caret { margin-left: 4px; }
.g-align .row hr { margin: 0 4px; }
.g-align .rows:first-child { width: 143px; }
.g-align .lab { gap: 3px; padding-left: 7px; }
.g-align .lab .caret { margin-left: 6px; }
.g-num .caret { margin: 0 3px; }
.g-num .row hr { margin: 0 6px 0 4px; }
.pct { font-size: 19px; }
.zeros { font-size: 11px; }
.t-icon { font: 700 10px "Open Sans", sans-serif; fill: #666; }
.t-num { font: 700 9px "Open Sans", sans-serif; fill: #555; }
.t-a { font: 700 18px "Open Sans", sans-serif; fill: #3f7cba; }
.t-z { font: 700 18px "Open Sans", sans-serif; fill: #9663b8; }
.t-app { font: 700 14px "Open Sans", sans-serif; fill: #fff; }
.g-styles .body { justify-content: space-between; padding: 0 9px 0 6px; }
.g-cells .body { justify-content: space-between; padding: 0 7px 0 6px; }
.g-edit .body { padding-left: 9px; padding-right: 7px; justify-content: space-between; }
.g-edit .stack { margin-top: -2px; }
.g-edit .stack .caret { margin-left: 0; }
.g-edit .stack .far { margin-left: 5px; }
.collapse { margin: auto 10px 6px auto; }

/* Formula bar */
.formula {
  flex: none;
  height: 102px;
  padding: 12px 6px 12px 6px;
  display: flex;
  align-items: flex-start;
  color: #444;
}
.formula .name { width: 238px; height: 30px; border-color: #c8c8c8; font-size: 15px; }
.formula .name input { padding: 0 6px; }
.formula .name::after { right: 8px; top: 13px; }
.dots { width: 3px; height: 14px; background: repeating-linear-gradient(#aaa 0 3px, transparent 3px 6px); }
.formula .dots { margin: 8px 17px; }
.fx { width: 137px; height: 30px; display: flex; justify-content: space-around; background: #fdfdfd; border: 1px solid #c8c8c8; }
.fn { font: italic 700 20px "Liberation Serif", serif; color: #666; }
.fn sub { font-size: 13px; }
.input { flex: 1; height: 78px; margin-left: 3px; display: flex; align-items: flex-start; background: #fdfdfd; border: 1px solid #c8c8c8; }
.input textarea {
  flex: 1;
  height: 100%;
  border: 0;
  padding: 4px 13px;
  resize: none;
  background: none;
  font: inherit;
  font-size: 15px;
  color: #444;
}
.input button { margin: 10px 4px; }

/* Worksheet */
.sheet { flex: 1; min-height: 0; display: flex; background: #e6e6e6; }
.pane { flex: 1; min-width: 0; overflow: hidden; border-right: 1px solid #999; border-bottom: 1px solid #999; background: #fff; }
.grid {
  width: 1px;
  table-layout: fixed;
  border-collapse: separate;
  border-spacing: 0;
  font: 14px/17px Lato, sans-serif;
  color: #000;
}
.w-n { width: 26px; }
.w-a { width: 171px; }
.w-b { width: 121px; }
.w-c { width: 92px; }
.w-d { width: 100px; }
.w-e { width: 88px; }
.w-f { width: 79px; }
.w-g { width: 85px; }
.w-h { width: 77px; }
.w-i { width: 111px; }
.w-x { width: 82px; }
.grid th {
  padding: 0;
  font: 13px/18px "Open Sans", sans-serif;
  background: #e6e6e6;
  border-right: 1px solid #999;
  border-bottom: 1px solid #c6c6c6;
  vertical-align: bottom;
}
.grid thead th {
  height: 20px;
  line-height: 19px;
  border-right-color: #c0c0c0;
  border-bottom-color: #999;
}
.grid .sel { background: #d2d2d2; color: #217346; }
.grid .corner { background: linear-gradient(135deg, #e6e6e6 60%, #b4b4b4 60%); }
.grid td {
  height: 19px;
  padding: 0 2px;
  border: solid #d4d4d4;
  border-width: 0 1px 1px 0;
  white-space: nowrap;
  vertical-align: bottom;
  overflow: hidden;
}
.grid .h20 td { height: 20px; line-height: 18px; }
.grid .h24 td { height: 24px; line-height: 18px; }
.grid .h38 td { height: 38px; line-height: 18px; vertical-align: middle; }
.grid .h39 td { height: 39px; line-height: 18px; }
.grid .b { font-weight: 700; }
.grid .c { text-align: center; }
.grid .m { font-size: 13px; }
.grid .r { text-align: right; padding-right: 6px; font-size: 13px; }
.grid .end { text-align: right; padding-right: 1px; }
.grid .ind { padding-left: 7px; }
.grid .h24 .head { font-size: 17px; line-height: 22px; font-weight: 700; padding-left: 3px; }
.grid .note { font-size: 15px; }
.grid .open { border-right-color: transparent; }
.grid .tight { padding: 0; }
.grid .in {
  background: #d9d9d9;
  font-size: 13px;
  font-weight: 700;
  text-align: center;
  border-color: #000;
}
.grid .n { font-weight: 400; }
.grid .box { border-bottom-color: #000; font-size: 13px; }
.grid .tr { border-right: 2px solid #000; }
.grid .tb { border-bottom: 2px solid #000; }
.grid .green { background: #0f0; }
.grid .red { background: #f00; }
.grid .flag { background: linear-gradient(135deg, #107c10 4px, #d9d9d9 5px); }
.grid .rest {
  padding: 0;
  border-right: 0;
  background: repeating-linear-gradient(90deg, transparent 0 81px, #d4d4d4 81px 82px);
}
.grid a { color: #0563c1; font-weight: 400; }
.grid .cursor { position: relative; overflow: visible; }
.cursor::before {
  content: "";
  position: absolute;
  inset: -2px -2px -2px -1px;
  border: 2px solid #217346;
}
.cursor::after {
  content: "";
  position: absolute;
  right: -3px;
  bottom: -3px;
  width: 5px;
  height: 5px;
  background: #217346;
  border: solid #fff;
  border-width: 1px 0 0 1px;
}

/* Scroll bars */
.tri { border: 5px solid transparent; }
.tri.up { border-top: 0; border-bottom-color: #666; }
.tri.down { border-bottom: 0; border-top-color: #666; }
.tri.left { border-left: 0; border-right-color: #666; }
.tri.right { border-right: 0; border-left-color: #666; }
.vscroll { width: 25px; padding: 2px 3px 0; display: flex; flex-direction: column; }
.vscroll button, .hscroll button {
  flex: none;
  width: 19px;
  height: 19px;
  justify-content: center;
  background: #fff;
  border: 1px solid #c0c0c0;
}
.track { flex: 1; background: #dadada; display: flex; }
.vscroll .track { flex-direction: column; }
.thumb { background: #fff; border: 1px solid #ababab; }
.vscroll .thumb { height: 97%; }
.hscroll .thumb { width: 95%; }

/* Sheet tabs */
.sheets {
  flex: none;
  height: 28px;
  display: flex;
  font-size: 16px;
  color: #444;
}
.sheets .nav { width: 103px; display: flex; gap: 22px; align-items: center; padding-left: 28px; }
.sheets .nav .left { border-right-color: #bbb; }
.sheets .nav .right { border-left-color: #bbb; }
.sheets > button { height: 20px; margin-top: 3px; padding: 0 19px; border-right: 1px solid #999; line-height: 16px; align-items: flex-start; }
.sheets > .active {
  height: 26px;
  margin-top: 0;
  padding: 2px 12px 0;
  background: #fff;
  border: solid #999;
  border-width: 0 1px;
  border-bottom: 2px solid #217346;
  color: #217346;
  font-weight: 700;
}
.sheets > .first { padding: 0 14px 0 13px; }
.sheets > .add { margin: 4px 0 0; padding: 0 0 0 33px; border: 0; }
.hscroll { width: 747px; margin-left: auto; margin-right: 23px; padding: 4px 0; display: flex; }
.hscroll .dots { margin: 3px 14px 0 0; }
.hscroll button:last-child { margin-left: 2px; }

/* Status bar */
.status {
  flex: none;
  height: 29px;
  padding: 0 8px 0 7px;
  display: flex;
  align-items: center;
  font-size: 12px;
  background: #f3f3f3;
  border-top: 1px solid #c6c6c6;
  border-bottom: 1px solid #aebfc4;
}
.status > svg { margin-left: 22px; }
.views { display: flex; height: 100%; margin-left: auto; }
.views button { width: 42px; justify-content: center; }
.views .on { background: #c6c6c6; }
.zoom { margin: 0 4px; }
.status input {
  appearance: none;
  width: 125px;
  height: 20px;
  margin: 0;
  background:
    linear-gradient(#999, #999) 50% 50% / 1px 10px no-repeat,
    linear-gradient(#999, #999) 0 50% / 100% 1px no-repeat;
}
.status input::-webkit-slider-thumb { appearance: none; width: 6px; height: 14px; background: #666; }
.percent { margin-left: 9px; white-space: nowrap; }

/* Taskbar */
.taskbar {
  flex: none;
  height: 59px;
  padding-bottom: 2px;
  display: grid;
  grid-template-columns: 1fr auto 1fr;
  align-items: center;
  background: #cfe8ee;
}
.weather { display: flex; align-items: center; gap: 8px; padding-left: 26px; }
.weather span { color: #555; }
.apps { display: flex; align-items: center; }
.apps button { width: 55px; height: 48px; justify-content: center; position: relative; }
.apps .search { width: 123px; height: 38px; margin: 0 5px 0 6px; gap: 6px; border-radius: 19px; background: #f0f8fa; }
.apps .current { width: 48px; margin: 0 3px 0 4px; border-radius: 4px; background: #e6f3f7; }
.running::after, .current::after {
  content: "";
  position: absolute;
  bottom: 0;
  width: 8px;
  height: 4px;
  border-radius: 2px;
  background: #7d8c90;
}
.current::after { width: 20px; background: #26839a; }
.tray { display: flex; justify-content: flex-end; align-items: center; gap: 10px; padding-right: 26px; }
.tray .wifi { margin-left: 6px; }
.tray p { text-align: right; margin: 0 2px 0 10px; }
```
